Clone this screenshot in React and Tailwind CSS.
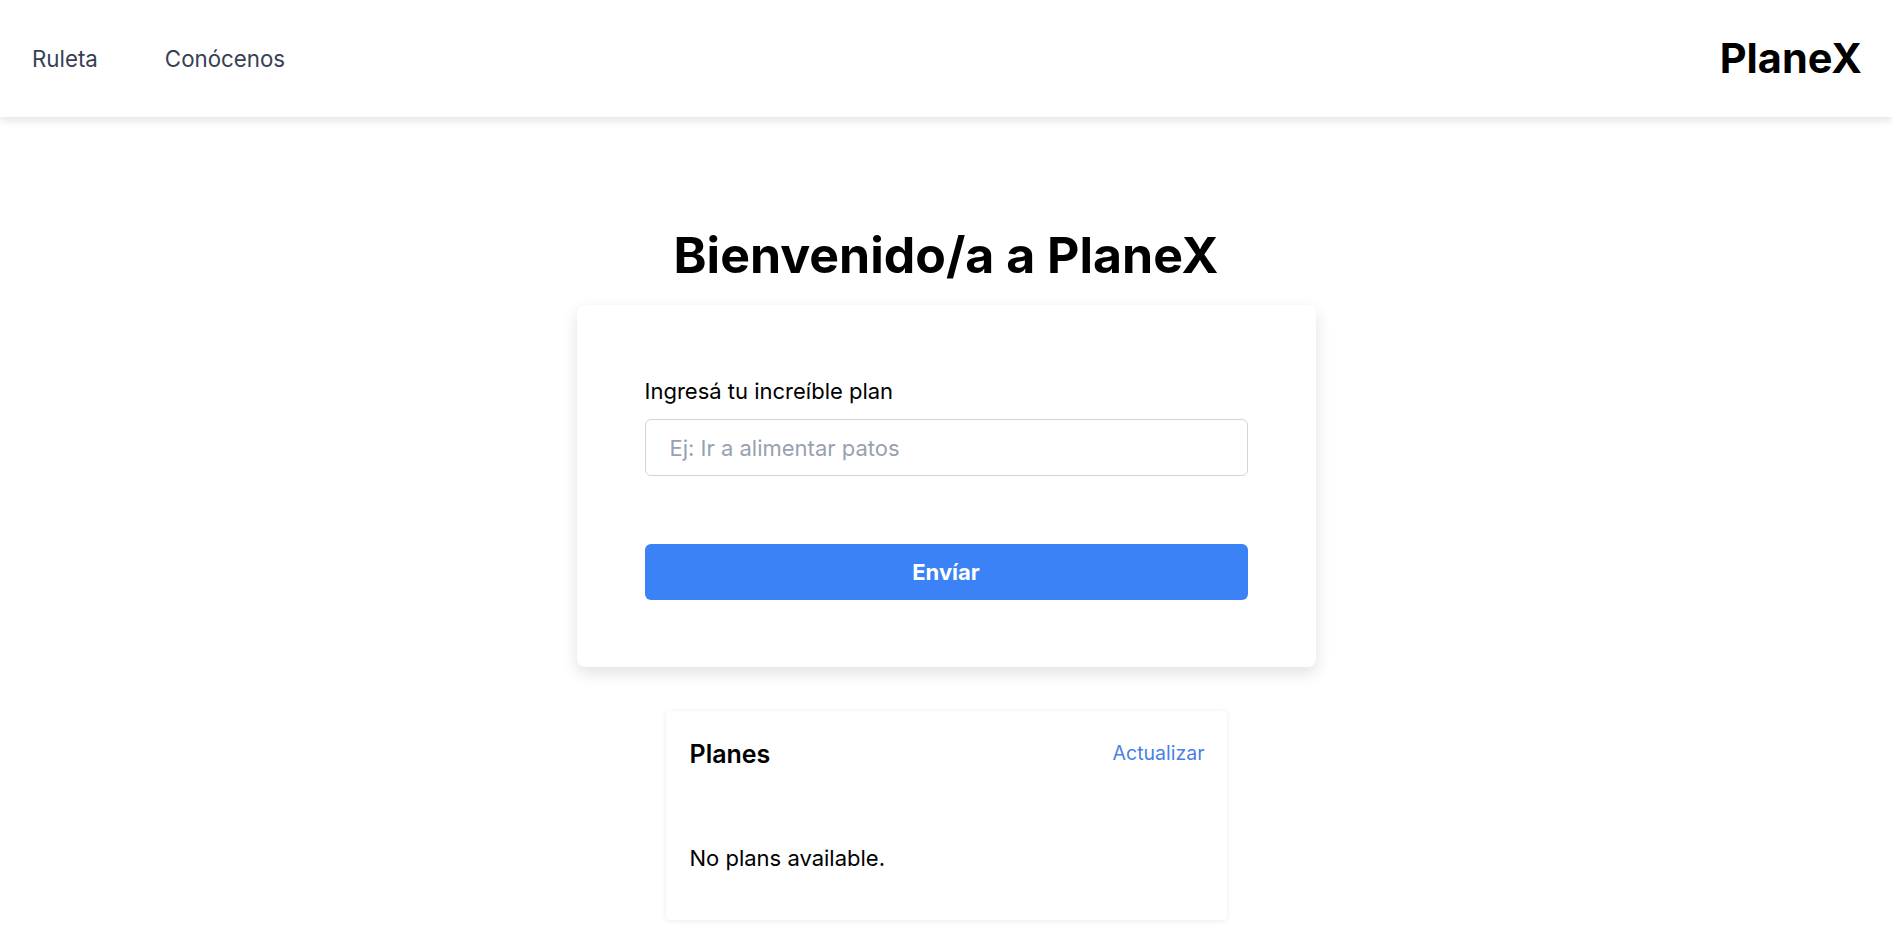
import React from "react";

export default function App() {
  return (
    <div className="min-h-screen bg-white" style={{ fontFamily: "Inter, 'Noto Sans', sans-serif" }}>
      <header className="h-[117px] flex items-center justify-between pl-8 pr-[30px] bg-white shadow-[0_4px_8px_rgba(0,0,0,0.1)] relative z-10">
        <nav className="flex items-center gap-[67px] text-[22.3px] text-gray-700">
          <a>Ruleta</a>
          <a>Conócenos</a>
        </nav>
        <div className="text-[41.5px] font-bold text-black">PlaneX</div>
      </header>
      <main className="flex flex-col items-center">
        <h1 className="mt-[113px] text-[50px] leading-none font-bold text-black">Bienvenido/a a PlaneX</h1>
        <div className="mt-[25px] w-[739px] bg-white rounded-lg shadow-[0_6px_16px_rgba(0,0,0,0.12)] px-[68px] pt-[72px] pb-[67px]">
          <label className="block text-[22px] leading-7 text-black">Ingresá tu increíble plan</label>
          <input
            className="mt-[14px] w-full h-[57px] rounded-md border border-gray-300 px-6 text-[22px] text-gray-700 placeholder:text-gray-400 outline-none"
            placeholder="Ej: Ir a alimentar patos"
          />
          <button className="mt-[68px] w-full h-[56px] rounded-md bg-[#3b82f6] text-white font-bold text-[22px]">
            Envíar
          </button>
        </div>
        <div className="mt-[44px] w-[561px] bg-white rounded shadow-[0_1px_6px_rgba(0,0,0,0.08)] pl-6 pr-[22px] pt-[27px] pb-12">
          <div className="flex items-center justify-between">
            <h2 className="text-[25px] leading-8 font-semibold text-black">Planes</h2>
            <button className="text-[19.5px] text-[#4a7fe8]">Actualizar</button>
          </div>
          <p className="mt-[74px] text-[22px] leading-7 text-black">No plans available.</p>
        </div>
      </main>
    </div>
  );
}
